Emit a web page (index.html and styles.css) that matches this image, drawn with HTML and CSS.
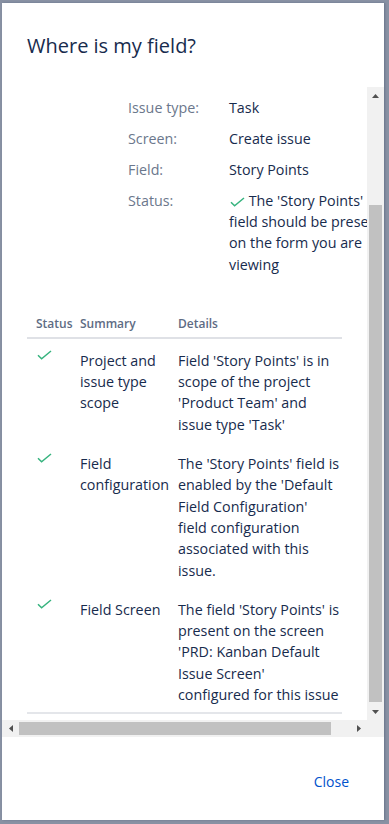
FILE: index.html
```html
<!DOCTYPE html>
<html lang="en">
<head>
  <meta charset="UTF-8" />
  <meta name="viewport" content="width=device-width, initial-scale=1.0"/>
  <title>Where is my field?</title>
  <link rel="stylesheet" href="styles.css">
</head>
<body>
  <div class="dialog">
    <header class="dialog-header">
      <h1>Where is my field?</h1>
    </header>

    <div class="scroller">
      <div class="viewport">
        <dl class="info">
          <dt>Issue type:</dt><dd>Task</dd>
          <dt>Screen:</dt><dd>Create issue</dd>
          <dt>Field:</dt><dd>Story Points</dd>
          <dt>Status:</dt>
          <dd><svg class="tick inline" width="15" height="10" viewBox="0 0 15 10"><path d="M1 5.2 L4.6 8.8 L14 1" /></svg> The 'Story Points' field should be present on the form you are viewing</dd>
        </dl>

        <table class="checks">
          <thead>
            <tr><th>Status</th><th>Summary</th><th>Details</th></tr>
          </thead>
          <tbody>
            <tr>
              <td><svg class="tick" width="15" height="10" viewBox="0 0 15 10"><path d="M1 5.2 L4.6 8.8 L14 1" /></svg></td>
              <td>Project and issue type scope</td>
              <td>Field 'Story Points' is in scope of the project 'Product Team' and issue type 'Task'</td>
            </tr>
            <tr>
              <td><svg class="tick" width="15" height="10" viewBox="0 0 15 10"><path d="M1 5.2 L4.6 8.8 L14 1" /></svg></td>
              <td>Field configuration</td>
              <td>The 'Story Points' field is enabled by the 'Default Field Configuration'<br>field configuration associated with this issue.</td>
            </tr>
            <tr>
              <td><svg class="tick" width="15" height="10" viewBox="0 0 15 10"><path d="M1 5.2 L4.6 8.8 L14 1" /></svg></td>
              <td>Field Screen</td>
              <td>The field 'Story Points' is present on the screen 'PRD: Kanban Default Issue Screen'<br>configured for this issue</td>
            </tr>
          </tbody>
        </table>
      </div>

      <!-- fake classic scrollbars -->
      <div class="vbar">
        <div class="arrow"><svg width="7" height="4" viewBox="0 0 7 4"><path d="M0 4 L3.5 0 L7 4 Z" /></svg></div>
        <div class="vtrack"><div class="vthumb"></div></div>
        <div class="arrow"><svg width="7" height="4" viewBox="0 0 7 4"><path d="M0 0 L3.5 4 L7 0 Z" /></svg></div>
      </div>
      <div class="hbar">
        <div class="arrow"><svg width="4" height="7" viewBox="0 0 4 7"><path d="M4 0 L0 3.5 L4 7 Z" /></svg></div>
        <div class="htrack"><div class="hthumb"></div></div>
        <div class="arrow"><svg width="4" height="7" viewBox="0 0 4 7"><path d="M0 0 L4 3.5 L0 7 Z" /></svg></div>
      </div>
      <div class="corner"></div>
    </div>

    <footer class="dialog-footer">
      <a href="#" class="close">Close</a>
    </footer>
  </div>
</body>
</html>
```

FILE: styles.css
```css
* { box-sizing: border-box; margin: 0; padding: 0; }
body {
  font-family: 'Open Sans', 'Noto Sans', sans-serif;
  background: #8891a3;
  color: #172b4d;
  height: 824px;
  overflow: hidden;
}
.dialog {
  margin: 3px 5px 0 2px;
  height: 817px;
  background: #fff;
  display: flex;
  flex-direction: column;
  box-shadow: 1px 0 2px rgba(9,30,66,0.25);
}
.dialog-header {
  height: 84px;
  padding: 29px 0 0 25px;
}
.dialog-header h1 {
  font-size: 20px;
  font-weight: 400;
  line-height: 28px;
  color: #172b4d;
}

.scroller {
  height: 650px;
  display: grid;
  grid-template-columns: 1fr 17px;
  grid-template-rows: 1fr 17px;
}
.viewport {
  overflow: hidden;
  padding-top: 10px;
  font-size: 14.3px;
  line-height: 21.3px;
}

.info {
  display: grid;
  grid-template-columns: 101px 160px;
  row-gap: 9.6px;
  margin-left: 126px;
  width: 261px;
}
.info dt { color: #6b778c; }
.info dd { color: #172b4d; }
.tick {
  display: block;
  fill: none;
  stroke: #36b37e;
  stroke-width: 1.5;
}
.tick.inline {
  display: inline-block;
  vertical-align: -1px;
  margin-left: 1px;
}

.checks {
  margin: 41px 0 0 25px;
  width: 315px;
  border-collapse: collapse;
  table-layout: fixed;
}
.checks th {
  font-size: 12px;
  font-weight: 600;
  line-height: 16px;
  color: #5e6c84;
  text-align: left;
  padding: 0 0 5px 9px;
  border-bottom: 2px solid #dfe1e6;
  white-space: nowrap;
}
.checks th:first-child { width: 44px; padding-left: 9px; }
.checks th:nth-child(2) { width: 98px; }
.checks td {
  vertical-align: top;
  padding: 11px 0 7px 9px;
}
.checks td:first-child { padding-left: 10px; }
.checks tbody tr:last-child td { border-bottom: 2px solid #e4e6ea; }

.vbar {
  background: #f1f1f1;
  display: grid;
  grid-template-rows: 17px 1fr 17px;
}
.hbar {
  background: #f1f1f1;
  display: grid;
  grid-template-columns: 17px 1fr 17px;
}
.corner { background: #f1f1f1; }
.arrow {
  display: flex;
  align-items: center;
  justify-content: center;
}
.arrow svg { fill: #505050; }
.vtrack { padding: 101px 2px 1px; }
.vthumb { height: 100%; background: #c1c1c1; }
.htrack { display: flex; padding: 2px 0; }
.hthumb { width: 312px; background: #c1c1c1; }

.dialog-footer {
  height: 83px;
  padding: 5px 35px 0 0;
  display: flex;
  justify-content: flex-end;
  align-items: center;
}
.close {
  color: #0052cc;
  text-decoration: none;
  font-size: 14px;
}
```
